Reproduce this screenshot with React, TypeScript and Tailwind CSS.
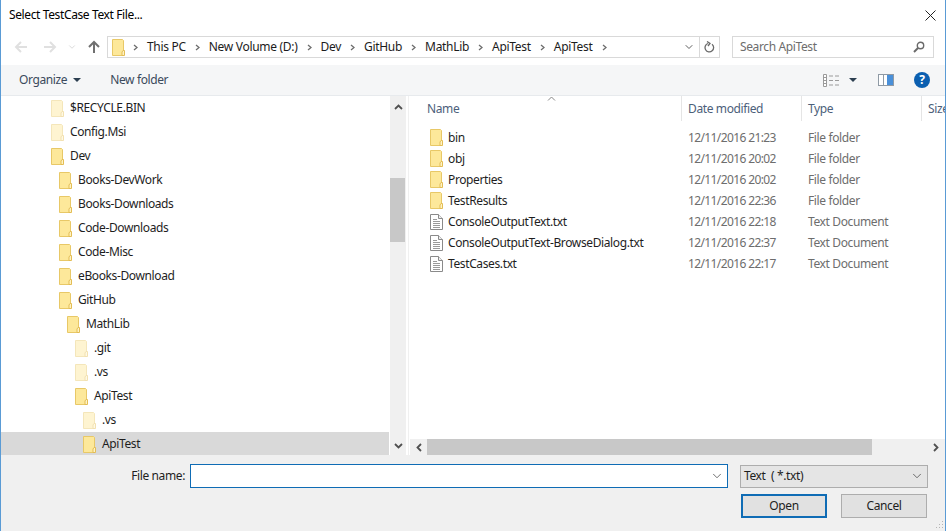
import { ChevronDown } from "lucide-react";

const tree = [
  { name: "$RECYCLE.BIN", depth: 0, faded: true },
  { name: "Config.Msi", depth: 0, faded: true },
  { name: "Dev", depth: 0 },
  { name: "Books-DevWork", depth: 1 },
  { name: "Books-Downloads", depth: 1 },
  { name: "Code-Downloads", depth: 1 },
  { name: "Code-Misc", depth: 1 },
  { name: "eBooks-Download", depth: 1 },
  { name: "GitHub", depth: 1 },
  { name: "MathLib", depth: 2 },
  { name: ".git", depth: 3, faded: true },
  { name: ".vs", depth: 3, faded: true },
  { name: "ApiTest", depth: 3 },
  { name: ".vs", depth: 4, faded: true },
  { name: "ApiTest", depth: 4, selected: true },
];

const files = [
  { name: "bin", date: "12/11/2016 21:23", type: "File folder", folder: true },
  { name: "obj", date: "12/11/2016 20:02", type: "File folder", folder: true },
  { name: "Properties", date: "12/11/2016 20:02", type: "File folder", folder: true },
  { name: "TestResults", date: "12/11/2016 22:36", type: "File folder", folder: true },
  { name: "ConsoleOutputText.txt", date: "12/11/2016 22:18", type: "Text Document" },
  { name: "ConsoleOutputText-BrowseDialog.txt", date: "12/11/2016 22:37", type: "Text Document" },
  { name: "TestCases.txt", date: "12/11/2016 22:17", type: "Text Document" },
];

const crumbs = ["This PC", "New Volume (D:)", "Dev", "GitHub", "MathLib", "ApiTest", "ApiTest"];

function Folder({ faded }: { faded?: boolean }) {
  return (
    <svg width="13" height="17" viewBox="0 0 13 17" className={`shrink-0 ${faded ? "opacity-45" : ""}`}>
      <path d="M0.5 0.5H10.5L11.5 1.5V16.5H0.5Z" fill="#fde89a" stroke="#e8c867" />
      <path d="M11 11.5H12.5V16.5H10V13Z" fill="#fff3c4" stroke="#e3bd55" strokeWidth="1" />
    </svg>
  );
}

function FileIcon() {
  return (
    <svg width="13" height="16" viewBox="0 0 13 16" className="shrink-0">
      <path d="M0.5 0.5H8.5L12.5 4.5V15.5H0.5Z" fill="#fff" stroke="#8a8a8a" />
      <path d="M8.5 0.5V4.5H12.5" fill="#eee" stroke="#8a8a8a" />
      <path d="M3 5.5H7M3 7.5H10M3 9.5H10M3 11.5H10M3 13.5H10" stroke="#9a9a9a" />
    </svg>
  );
}

function Sep() {
  return (
    <svg width="5" height="7" viewBox="0 0 5 7" className="shrink-0">
      <path d="M1 1L4 3.5L1 6" fill="none" stroke="#6d6d6d" strokeWidth="1.3" />
    </svg>
  );
}

function ArrowIcon({ dir, color }: { dir: "left" | "right" | "up"; color: string }) {
  const d =
    dir === "left" ? "M13 7H2M7 2L2 7L7 12" : dir === "right" ? "M1 7H12M7 2L12 7L7 12" : "M7 13V2M2 7L7 2L12 7";
  return (
    <svg width="14" height="14" viewBox="0 0 14 14" className="shrink-0">
      <path d={d} fill="none" stroke={color} strokeWidth="2" />
    </svg>
  );
}

function ScrollArrow({ d }: { d: string }) {
  return (
    <svg width="9" height="7" viewBox="0 0 9 7">
      <path d={d} fill="none" stroke="#505050" strokeWidth="1.8" />
    </svg>
  );
}

export default function App() {
  return (
    <div
      className="w-[946px] h-[531px] flex flex-col bg-white overflow-hidden border-x border-[#5a9bd5] text-[12px] text-[#1e1e1e] tracking-[-0.38px]"
      style={{ fontFamily: '"Noto Sans", "Open Sans", sans-serif' }}
    >
      {/* title */}
      <div className="h-[30px] shrink-0 flex items-center justify-between pl-2 pr-[9px] text-black">
        <span>Select TestCase Text File...</span>
        <svg width="11" height="11" viewBox="0 0 11 11">
          <path d="M0.5 0.5L10.5 10.5M10.5 0.5L0.5 10.5" stroke="#222" strokeWidth="1" />
        </svg>
      </div>

      {/* address bar */}
      <div className="h-[35px] shrink-0 flex items-start pt-[6px]">
        <div className="w-[106px] h-[22px] shrink-0 flex items-center pl-[13px]">
          <ArrowIcon dir="left" color="#e0e0e0" />
          <span className="ml-[15px]">
            <ArrowIcon dir="right" color="#e0e0e0" />
          </span>
          <ChevronDown className="ml-[10px] shrink-0" size={10} strokeWidth={2} color="#d4d4d4" />
          <span className="ml-[10px]">
            <ArrowIcon dir="up" color="#707070" />
          </span>
        </div>
        <div className="w-[613px] h-[22px] border border-[#d9d9d9] flex items-center">
          <span className="ml-[4px] mr-[8px] flex">
            <Folder />
          </span>
          <div className="flex-1 flex items-center gap-[9px] text-[#1c1c1c] tracking-[-0.3px]">
            {crumbs.map((c, i) => (
              <div key={i} className="flex items-center gap-[9px]">
                <Sep />
                <span>{c}</span>
              </div>
            ))}
            <Sep />
          </div>
          <div className="w-[20px] h-full flex items-center justify-center">
            <ChevronDown size={12} strokeWidth={2} color="#5f5f5f" />
          </div>
          <div className="w-[20px] h-full border-l border-[#d9d9d9] flex items-center justify-center">
            <svg width="11" height="13" viewBox="0 0 11 13">
              <path d="M4 2.5A4.3 4.3 0 1 0 8 3.2M3 0.5L6 2.5L4 5" fill="none" stroke="#6a6a6a" strokeWidth="1.3" />
            </svg>
          </div>
        </div>
        <div className="ml-[12px] w-[202px] h-[22px] border border-[#d9d9d9] flex items-center justify-between pl-[7px] pr-[8px] text-[#6d6d6d]">
          <span>Search ApiTest</span>
          <svg width="12" height="12" viewBox="0 0 12 12">
            <circle cx="7.5" cy="4.5" r="3.2" fill="none" stroke="#6a6a6a" strokeWidth="1.4" />
            <path d="M5 7L1 11" stroke="#6a6a6a" strokeWidth="2" />
          </svg>
        </div>
      </div>

      {/* toolbar */}
      <div className="h-[30px] shrink-0 bg-[#f5f6f7] flex items-center pl-[18px] pr-[15px] text-[#3b4a5c]">
        <span>Organize</span>
        <svg width="8" height="4" viewBox="0 0 8 4" className="ml-[6px]">
          <path d="M0 0H8L4 4Z" fill="#2c3e50" />
        </svg>
        <span className="ml-[29px]">New folder</span>
        <div className="ml-auto flex items-center">
          <svg width="16" height="13" viewBox="0 0 16 13">
            <path d="M0.5 0.5H3.5V12.5H0.5ZM0.5 3.5H3.5M0.5 6.5H3.5M0.5 9.5H3.5" fill="#fff" stroke="#9a9a9a" />
            <path d="M6 2H10M12 2H16M6 6.5H10M12 6.5H16M6 11H10M12 11H16" stroke="#9a9a9a" />
          </svg>
          <svg width="8" height="4" viewBox="0 0 8 4" className="ml-[10px]">
            <path d="M0 0H8L4 4Z" fill="#2c3e50" />
          </svg>
          <svg width="16" height="12" viewBox="0 0 16 12" className="ml-[21px]">
            <rect x="0.5" y="0.5" width="15" height="11" fill="#fff" stroke="#8f9aa5" />
            <path d="M5.5 0.5V11.5" stroke="#8f9aa5" />
            <rect x="9" y="1" width="6" height="10" fill="#4a90d9" />
          </svg>
          <div className="ml-[20px] w-4 h-4 rounded-full bg-[#0b5fb0] text-white font-bold text-[12px] flex items-center justify-center">
            ?
          </div>
        </div>
      </div>

      {/* main */}
      <div className="h-[360px] shrink-0 flex border-t border-[#e7eaed]">
        <div className="w-[388px] shrink-0 overflow-hidden">
          {tree.map((row, i) => (
            <div
              key={i}
              className={`h-[24px] flex items-center gap-[6px] ${row.selected ? "bg-[#d9d9d9]" : ""} ${
                row.depth === 0
                  ? "pl-[50px]"
                  : row.depth === 1
                    ? "pl-[58px]"
                    : row.depth === 2
                      ? "pl-[66px]"
                      : row.depth === 3
                        ? "pl-[74px]"
                        : "pl-[82px]"
              }`}
            >
              <Folder faded={row.faded} />
              <span>{row.name}</span>
            </div>
          ))}
        </div>
        <div className="ml-[1px] w-[16px] shrink-0 bg-[#f0f0f0] flex flex-col items-center">
          <div className="h-[20px] w-full flex items-center justify-center">
            <ScrollArrow d="M1 6L4.5 2.5L8 6" />
          </div>
          <div className="mt-[62px] h-[64px] w-[15px] self-start bg-[#c8c8c8]" />
          <div className="mt-auto h-[17px] w-full flex items-center justify-center">
            <ScrollArrow d="M1 1L4.5 4.5L8 1" />
          </div>
        </div>
        <div className="w-[3px] shrink-0 border-r border-[#f0f0f0]" />
        <div className="flex-1 min-w-0 flex flex-col">
          <div className="relative h-[25px] shrink-0 flex text-[#4c607a] overflow-hidden">
            <svg width="9" height="5" viewBox="0 0 9 5" className="absolute left-[138px] top-0">
              <path d="M1 4.5L4.5 1L8 4.5" fill="none" stroke="#888" />
            </svg>
            <div className="w-[273px] shrink-0 pl-[18px] flex items-center border-r border-[#e5e5e5]">Name</div>
            <div className="w-[120px] shrink-0 pl-[6px] flex items-center border-r border-[#e5e5e5]">Date modified</div>
            <div className="w-[120px] shrink-0 pl-[6px] flex items-center border-r border-[#e5e5e5]">Type</div>
            <div className="pl-[6px] flex items-center">Size</div>
          </div>
          <div className="flex-1 pt-[6px]">
            {files.map((f) => (
              <div key={f.name} className="h-[21px] flex items-center">
                <div className="w-[279px] shrink-0 flex items-center pl-[21px] gap-[5px]">
                  {f.folder ? <Folder /> : <FileIcon />}
                  <span className="whitespace-nowrap">{f.name}</span>
                </div>
                <div className="w-[120px] shrink-0 text-[#6d6d6d] tracking-[-0.62px]">{f.date}</div>
                <div className="text-[#6d6d6d]">{f.type}</div>
              </div>
            ))}
          </div>
          <div className="ml-[1px] h-[16px] shrink-0 bg-[#f0f0f0] flex items-center">
            <div className="w-[17px] h-full flex items-center justify-center">
              <svg width="7" height="9" viewBox="0 0 7 9">
                <path d="M6 1L2.5 4.5L6 8" fill="none" stroke="#505050" strokeWidth="1.8" />
              </svg>
            </div>
            <div className="w-[445px] h-full bg-[#c8c8c8]" />
            <div className="ml-auto w-[17px] h-full flex items-center justify-center">
              <svg width="7" height="9" viewBox="0 0 7 9">
                <path d="M1 1L4.5 4.5L1 8" fill="none" stroke="#505050" strokeWidth="1.8" />
              </svg>
            </div>
          </div>
        </div>
      </div>

      {/* bottom */}
      <div className="relative flex-1 bg-[#f0f0f0] pt-[9px] pl-[130px]">
        <div className="flex items-center h-[24px]">
          <span className="w-[54px] shrink-0 text-right text-[#1e1e1e] whitespace-nowrap">File name:</span>
          <div className="ml-[5px] w-[538px] h-[24px] bg-white border border-[#0f6cb5] flex items-center justify-end pr-[3px]">
            <ChevronDown size={14} strokeWidth={1.3} color="#444" />
          </div>
          <div className="ml-[12px] w-[188px] h-[23px] bg-[#e5e5e5] border border-[#adadad] flex items-center justify-between pl-[3px] pr-[3px]">
            <span>Text&nbsp; ( *.txt)</span>
            <ChevronDown size={14} strokeWidth={1.3} color="#444" />
          </div>
        </div>
        <div className="flex mt-[6px] pl-[610px]">
          <button className="w-[86px] h-[24px] bg-[#e1e1e1] border-2 border-[#0f6cb5] text-[#1e1e1e]">Open</button>
          <button className="ml-[14px] w-[86px] h-[24px] bg-[#e1e1e1] border border-[#adadad] text-[#1e1e1e]">
            Cancel
          </button>
        </div>
        <svg width="10" height="10" viewBox="0 0 10 10" className="absolute right-[1px] bottom-[1px]">
          <path d="M8 1h1v1H8zM5 4h1v1H5zM8 4h1v1H8zM2 7h1v1H2zM5 7h1v1H5zM8 7h1v1H8z" fill="#b5b5b5" />
        </svg>
      </div>
    </div>
  );
}
